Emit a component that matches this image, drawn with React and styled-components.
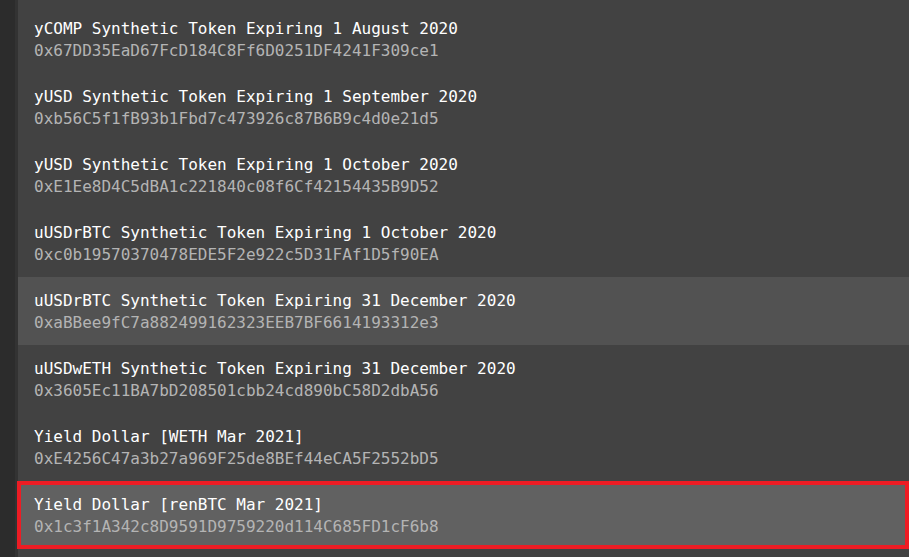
import React from 'react'
import styled, { createGlobalStyle } from 'styled-components'

const tokens = [
  { name: 'yCOMP Synthetic Token Expiring 1 August 2020', address: '0x67DD35EaD67FcD184C8Ff6D0251DF4241F309ce1' },
  { name: 'yUSD Synthetic Token Expiring 1 September 2020', address: '0xb56C5f1fB93b1Fbd7c473926c87B6B9c4d0e21d5' },
  { name: 'yUSD Synthetic Token Expiring 1 October 2020', address: '0xE1Ee8D4C5dBA1c221840c08f6Cf42154435B9D52' },
  { name: 'uUSDrBTC Synthetic Token Expiring 1 October 2020', address: '0xc0b19570370478EDE5F2e922c5D31FAf1D5f90EA' },
  { name: 'uUSDrBTC Synthetic Token Expiring 31 December 2020', address: '0xaBBee9fC7a882499162323EEB7BF6614193312e3', hover: true },
  { name: 'uUSDwETH Synthetic Token Expiring 31 December 2020', address: '0x3605Ec11BA7bD208501cbb24cd890bC58D2dbA56' },
  { name: 'Yield Dollar [WETH Mar 2021]', address: '0xE4256C47a3b27a969F25de8BEf44eCA5F2552bD5' },
  { name: 'Yield Dollar [renBTC Mar 2021]', address: '0x1c3f1A342c8D9591D9759220d114C685FD1cF6b8', selected: true },
]

export default function App() {
  return (
    <>
      <GlobalStyle />
      <Page>
        <Rail />
        <List>
          {tokens.map((item) => (
            <Row key={item.address} $hover={item.hover} $selected={item.selected}>
              <Name>{item.name}</Name>
              <Address>{item.address}</Address>
            </Row>
          ))}
        </List>
      </Page>
    </>
  )
}

const GlobalStyle = createGlobalStyle`
  html, body {
    margin: 0;
    padding: 0;
    background: #424242;
    overflow: hidden;
  }
`

const Page = styled.div`
  display: flex;
  width: 909px;
  height: 557px;
  font-family: "DejaVu Sans Mono", "Liberation Mono", monospace;
`

const Rail = styled.div`
  width: 15px;
  flex-shrink: 0;
  background: #2c2c2c;
  border-right: 3px solid #333333;
`

const List = styled.div`
  flex: 1;
  padding-top: 5px;
  background: #424242;
  display: flex;
  flex-direction: column;
`

const Row = styled.div`
  box-sizing: border-box;
  height: 68px;
  padding: 13px 16px 11px;
  display: flex;
  flex-direction: column;
  cursor: pointer;
  background: ${(p) => (p.$selected ? '#616161' : p.$hover ? '#525252' : 'transparent')};
  ${(p) => p.$selected && `
    outline: 4px solid #ed1c24;
    outline-offset: -4px;
    margin-left: -1px;
    padding-left: 17px;
  `}
`

const Name = styled.div`
  font-size: 16px;
  line-height: 22px;
  color: #ffffff;
  white-space: nowrap;
`

const Address = styled.div`
  font-size: 16px;
  line-height: 22px;
  color: #b4b4b4;
  white-space: nowrap;
`
